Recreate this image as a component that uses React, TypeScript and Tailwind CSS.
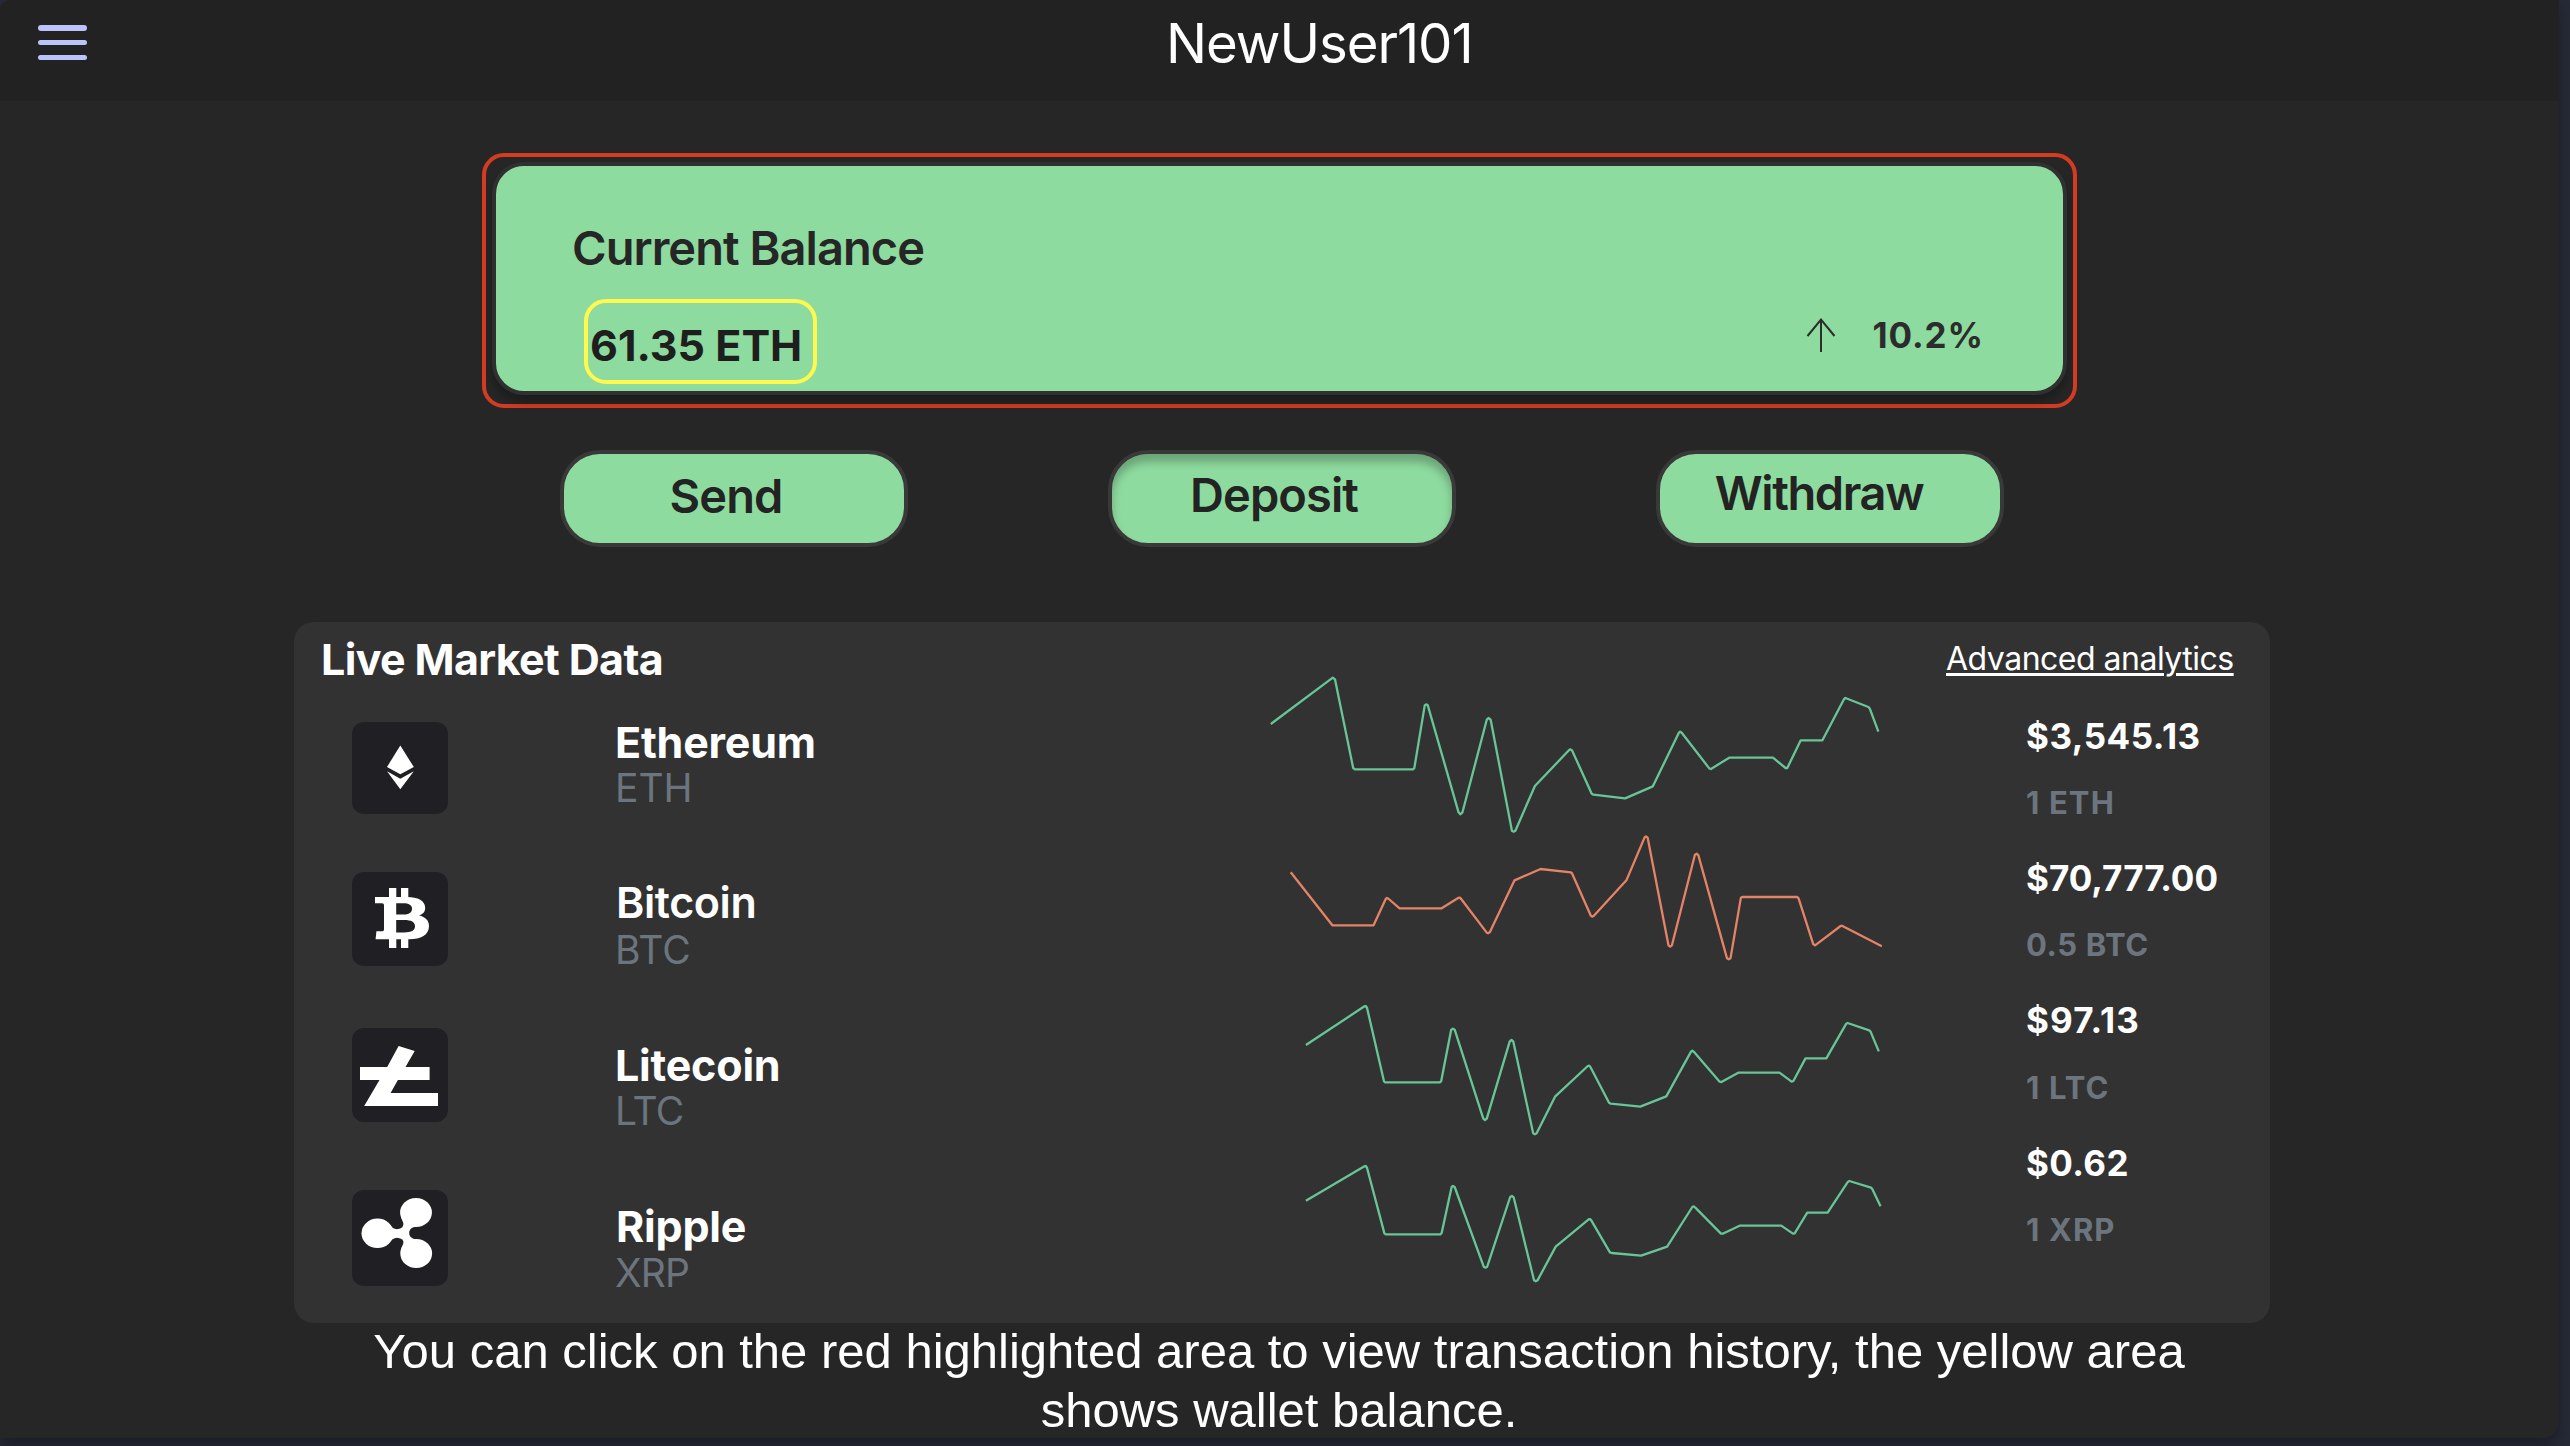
import type { ReactNode } from "react";

function EthereumLogo() {
  return (
    <svg viewBox="0 0 96 92" className="h-[92px] w-24 fill-white">
      <path d="M48.3 23.5 61.8 45 48.3 52.3 35 45Z" />
      <path d="M35 49.2 48.3 56.8 61.8 49.2 48.3 67.2Z" />
    </svg>
  );
}

function BitcoinLogo() {
  return (
    <svg viewBox="0 0 96 94" className="h-[94px] w-24 fill-white">
      <path d="M37 16h7.3v10H37zM49 16h7.3v10H49zM37 66h7.3v10H37zM49 66h7.3v10H49z" />
      <path
        fillRule="evenodd"
        d="M23 25.1H55C66 25.1 73.2 29 73.2 35.8C73.2 40 71 42.3 67 43.6C73.5 45 77 48.5 77 54C77 63 69 67.2 57 67.2H23.6L24.4 59.2H30.5Q32 59.2 32 57.5V33Q32 31.2 30 31.2H23ZM44.2 31.2V42.6H51C57 42.6 60 40.5 60 36.8C60 33 57 31.2 51 31.2ZM44.2 48V60.4H52C59.5 60.4 63 58.5 63 54.2C63 50 59.5 48 52 48Z"
      />
    </svg>
  );
}

function LitecoinLogo() {
  return (
    <svg viewBox="0 0 96 94" className="h-[94px] w-24 fill-white">
      <path d="M46.6 18 62.7 23 53.5 39H77.6V52H45.9L38.6 65H86V78H12.2L27.5 52H8V39H35.2Z" />
    </svg>
  );
}

function RippleLogo() {
  return (
    <svg viewBox="0 0 96 96" className="h-24 w-24 fill-white">
      <ellipse cx="25.5" cy="43.3" rx="16" ry="14.7" />
      <ellipse cx="64" cy="22.4" rx="15.9" ry="14.5" />
      <ellipse cx="64.2" cy="63.6" rx="15.9" ry="14.5" />
      <path d="M36 32.5Q40.5 39.3 45 39.3Q52.5 38.3 51.3 33L49 27 64 36.8C59.5 37 57.2 40 57.2 43C57.2 46.5 60 49.1 64 49.2L49 59 51.3 53.5Q52.5 48.5 45 47.7Q40.5 47.7 36 54Z" />
    </svg>
  );
}

type Coin = {
  name: string;
  symbol: string;
  price: string;
  unit: string;
  logo: ReactNode;
  tile: string;
  nameBlock: string;
  nameText: string;
  symbolText: string;
  priceText: string;
  unitText: string;
};

const coins: Coin[] = [
  {
    name: "Ethereum",
    symbol: "ETH",
    price: "$3,545.13",
    unit: "1 ETH",
    logo: <EthereumLogo />,
    tile: "h-[92px]",
    nameBlock: "",
    nameText: "font-bold tracking-[-0.2px]",
    symbolText: "",
    priceText: "tracking-[0.5px]",
    unitText: "tracking-[1.1px]",
  },
  {
    name: "Bitcoin",
    symbol: "BTC",
    price: "$70,777.00",
    unit: "0.5 BTC",
    logo: <BitcoinLogo />,
    tile: "mt-[58px] h-[94px]",
    nameBlock: "mt-[68px]",
    nameText: "ml-px font-semibold tracking-[-0.4px]",
    symbolText: "mt-[2px]",
    priceText: "",
    unitText: "tracking-[0.6px]",
  },
  {
    name: "Litecoin",
    symbol: "LTC",
    price: "$97.13",
    unit: "1 LTC",
    logo: <LitecoinLogo />,
    tile: "mt-[62px] h-[94px]",
    nameBlock: "mt-[69px]",
    nameText: "font-bold tracking-[-0.2px]",
    symbolText: "tracking-[-0.8px]",
    priceText: "tracking-[1.15px]",
    unitText: "tracking-[1.1px]",
  },
  {
    name: "Ripple",
    symbol: "XRP",
    price: "$0.62",
    unit: "1 XRP",
    logo: <RippleLogo />,
    tile: "mt-[68px] h-24",
    nameBlock: "mt-[69px]",
    nameText: "ml-px font-bold tracking-[-0.2px]",
    symbolText: "mt-px tracking-[-0.8px]",
    priceText: "tracking-[0.4px]",
    unitText: "tracking-[1.1px]",
  },
];

type Chart = { box: string; viewBox: string; color: string; points: string };

const charts: Chart[] = [
  {
    box: "mt-12 h-[164px]",
    viewBox: "0 60 1568 492",
    color: "#68c598",
    points:
      "71,222 214,83 219,88 261,354 265,358 399,358 402,354 426,166 429,163 433,166 504,487 508,493 513,487 569,209 573,204 578,209 627,542 631,545 635,542 680,408 759,300 762,298 766,302 811,431 815,434 888,445 952,409 1012,248 1015,245 1019,249 1082,355 1086,357 1128,323 1229,323 1258,354 1262,354 1293,271 1343,271 1393,147 1396,144 1449,171 1452,175 1472,245",
  },
  {
    box: "h-[130px]",
    viewBox: "0 552 1568 390",
    color: "#e48366",
    points:
      "117,667 213,826 308,826 336,747 339,744 343,747 368,775 465,775 503,744 507,743 510,747 569,848 572,850 576,847 633,691 693,657 763,667 766,671 809,797 812,800 816,797 891,691 933,562 936,559 940,563 988,886 992,890 996,886 1049,614 1053,611 1057,616 1123,925 1127,928 1131,925 1155,743 1158,741 1285,741 1288,745 1322,883 1326,886 1385,828 1388,827 1480,889",
  },
  {
    box: "mt-[39px] h-[134px]",
    viewBox: "0 69 1568 402",
    color: "#68c598",
    points:
      "152,195 287,79 290,78 293,84 332,304 335,307 461,307 464,303 487,149 491,146 495,149 561,416 565,420 569,416 622,184 626,180 630,184 676,460 680,463 684,460 727,349 802,258 805,257 808,261 851,368 855,371 923,380 983,349 1040,215 1043,212 1047,216 1106,305 1110,306 1149,278 1244,278 1272,305 1276,303 1304,235 1352,235 1398,131 1401,129 1451,151 1454,155 1473,214",
  },
  {
    box: "mt-[26px] h-[122px]",
    viewBox: "0 549 1568 366",
    color: "#68c598",
    points:
      "152,662 287,559 290,558 293,564 333,760 336,763 462,763 465,759 488,621 491,618 495,621 562,860 566,863 570,860 623,651 627,648 631,652 678,901 682,904 686,901 728,800 804,718 807,717 810,721 853,817 857,819 925,827 985,800 1043,681 1046,679 1050,683 1109,761 1113,761 1152,737 1248,737 1275,761 1279,760 1308,698 1355,698 1402,605 1405,603 1455,623 1458,627 1477,679",
  },
];

function Sparkline({ box, viewBox, color, points }: Chart) {
  return (
    <svg viewBox={viewBox} preserveAspectRatio="none" className={`w-[680px] overflow-visible ${box}`}>
      <polyline
        points={points}
        fill="none"
        stroke={color}
        strokeWidth="2.3"
        strokeLinejoin="round"
        vectorEffect="non-scaling-stroke"
      />
    </svg>
  );
}

function BalanceCard() {
  return (
    <section className="ml-[482px] mt-[52px] h-[255px] w-[1595px] rounded-[22px] border-4 border-[#d43c22] px-[6px] py-[5px]">
      <div className="flex h-[233px] justify-between rounded-[32px] border-4 border-[#303030] bg-[#8edb9f] shadow-[0_8px_8px_rgba(0,0,0,0.25)]">
        <div className="flex flex-col items-start">
          <h2 className="ml-[76px] mt-[54px] text-[47px] leading-[56px] font-semibold tracking-[-0.95px] text-[#262626]">
            Current Balance
          </h2>
          <div className="ml-[88px] mt-[23px] h-[85px] w-[233px] rounded-[22px] border-4 border-[#fff94f] pl-[2px] pt-[14px] text-[43px] leading-[56px] font-bold whitespace-nowrap text-[#1e1e1e]">
            61.35 ETH
          </div>
        </div>
        <div className="mr-[79px] mt-[148px] flex h-[44px] items-start text-[#2c2c2c]">
          <svg viewBox="0 0 30 36" className="mr-[37px] mt-[3px] h-9 w-[30px]" fill="none" stroke="currentColor" strokeWidth="2">
            <path d="M15 35V2M1.5 19 15 2.5 28.5 19" />
          </svg>
          <span className="text-[35px] leading-[43px] font-bold tracking-[0.9px]">10.2%</span>
        </div>
      </div>
    </section>
  );
}

const actions = [
  { label: "Send", style: "pr-4 pb-[6px] tracking-[-0.85px]" },
  { label: "Deposit", style: "pr-4 pb-[8px] tracking-[-0.9px] shadow-[inset_0_8px_8px_rgba(0,0,0,0.25)]" },
  { label: "Withdraw", style: "pr-[22px] pb-[12px] tracking-[-1.4px]" },
];

function MarketPanel() {
  return (
    <section className="ml-[294px] mt-[75px] flex h-[701px] w-[1976px] rounded-[20px] bg-[#323232]">
      <div className="w-[946px]">
        <h2 className="ml-[27px] mt-[15px] text-[43px] leading-[44px] font-bold tracking-[-0.65px] text-white">
          Live Market Data
        </h2>
        <div className="ml-[58px] mt-[38px] flex">
          <div className="mt-[3px] flex w-24 flex-col">
            {coins.map((c) => (
              <div key={c.symbol} className={`w-24 rounded-xl bg-[#201f24] ${c.tile}`}>
                {c.logo}
              </div>
            ))}
          </div>
          <div className="ml-[167px] flex flex-col">
            {coins.map((c) => (
              <div key={c.symbol} className={c.nameBlock}>
                <div className={`text-[43px] leading-[46px] text-white ${c.nameText}`}>{c.name}</div>
                <div className={`text-[39px] leading-[46px] font-normal text-[#6c757d] ${c.symbolText}`}>{c.symbol}</div>
              </div>
            ))}
          </div>
        </div>
      </div>
      <div className="flex w-[680px] flex-col">
        {charts.map((c) => (
          <Sparkline key={c.viewBox} {...c} />
        ))}
      </div>
      <div className="w-[350px] whitespace-nowrap">
        <a className="ml-[26px] mt-[17px] block text-[32px] leading-[40px] tracking-[-0.5px] text-white underline decoration-[3px] underline-offset-[3px]">
          Advanced analytics
        </a>
        <div className="ml-[106px] mt-[36px] flex flex-col gap-[33px] font-bold">
          {coins.map((c) => (
            <div key={c.symbol} className="flex flex-col gap-[25.2px]">
              <div className={`text-[35px] leading-[42px] text-white ${c.priceText}`}>{c.price}</div>
              <div className={`text-[31px] leading-[42px] text-[#6c757d] ${c.unitText}`}>{c.unit}</div>
            </div>
          ))}
        </div>
      </div>
    </section>
  );
}

export default function App() {
  return (
    <div className="h-[1446px] w-[2570px] overflow-hidden bg-[#262a36] font-['Inter',sans-serif]">
      <main className="h-[1438px] w-[2559px] overflow-hidden rounded-tl-[10px] rounded-br-[16px] bg-[#262626] shadow-[0_8px_14px_rgba(0,0,0,0.28)]">
        <header className="flex h-[101px] bg-[#222222]">
          <div className="ml-[38px] mt-[25.4px] flex w-[49px] flex-col gap-[9.6px]">
            <span className="h-[5.2px] rounded-[3px] bg-[#bcc3fa]" />
            <span className="h-[5.2px] rounded-[3px] bg-[#bcc3fa]" />
            <span className="h-[5.2px] rounded-[3px] bg-[#bcc3fa]" />
          </div>
          <h1 className="ml-[1079px] mt-[13px] text-[54.5px] leading-[60px] tracking-[-1.02px] text-white">NewUser101</h1>
        </header>
        <BalanceCard />
        <div className="ml-[560px] mt-[42px] flex gap-[200px]">
          {actions.map((a) => (
            <button
              key={a.label}
              className={`flex h-[97px] w-[348px] items-center justify-center rounded-[40px] border-4 border-[#393939] bg-[#8edb9f] text-[47px] leading-none font-semibold text-[#232323] ${a.style}`}
            >
              {a.label}
            </button>
          ))}
        </div>
        <MarketPanel />
        <p className="-mt-px ml-[279px] w-[2000px] text-center font-['Liberation_Sans',sans-serif] text-[49px] leading-[59px] text-white">
          You can click on the red highlighted area to view transaction history, the yellow area
          <br />
          shows wallet balance.
        </p>
      </main>
    </div>
  );
}
